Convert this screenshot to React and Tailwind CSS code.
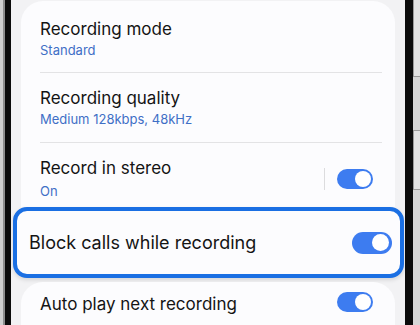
function Toggle({ big }) {
  return (
    <div
      className={
        big
          ? 'flex h-[22px] w-[40px] items-center justify-end rounded-full bg-[#3d7cf0] px-[3px]'
          : 'flex h-[20px] w-[36px] items-center justify-end rounded-full bg-[#3d7cf0] px-[2px]'
      }
    >
      <div className={big ? 'h-[17px] w-[17px] rounded-full bg-white' : 'h-[16px] w-[16px] rounded-full bg-white'} />
    </div>
  );
}

function SettingRow({ title, value }) {
  return (
    <div className="flex flex-col">
      <p className="text-[17px] leading-[22px] text-[#141414]">{title}</p>
      <p className="mt-[1px] text-[13px] leading-[18px] text-[#3f6fc6]">{value}</p>
    </div>
  );
}

export default function App() {
  return (
    <div className="flex h-[325px] w-[420px] overflow-hidden bg-[#f2f2f4] font-['Inter',sans-serif]">
      {/* left bezel */}
      <div className="flex h-full shrink-0">
        <div className="w-[3px] bg-[#cfcfcf]" />
        <div className="w-[2px] bg-[#8d8d8d]" />
        <div className="w-[6px] bg-[#0b0b0b]" />
      </div>

      {/* screen */}
      <div className="flex min-w-0 flex-1 flex-col">
        <div className="mx-[10px] mt-[1px] h-[206px] shrink-0 rounded-t-[22px] bg-[#fcfcfe] px-[19px] pt-[17px]">
          <SettingRow title="Recording mode" value="Standard" />
          <div className="mt-[13px] h-px w-[342px] bg-[#e3e3e5]" />
          <div className="pt-[14px]">
            <SettingRow title="Recording quality" value="Medium 128kbps, 48kHz" />
          </div>
          <div className="mt-[14px] h-px w-[342px] bg-[#e3e3e5]" />
          <div className="flex items-center pt-[14px]">
            <div className="flex flex-1 flex-col">
              <p className="text-[17px] leading-[22px] text-[#141414]">Record in stereo</p>
              <p className="mt-[3px] text-[13px] leading-[18px] text-[#3f6fc6]">On</p>
            </div>
            <div className="mr-[12px] h-[22px] w-px bg-[#dcdcde]" />
            <Toggle />
            <div className="w-[3px]" />
          </div>
        </div>

        <div className="ml-[2px] mr-[1px] flex h-[71px] shrink-0 items-center rounded-[14px] border-[4px] border-[#1a6fe3] bg-[#fcfcfe] pl-[12px] pr-[8px] shadow-[0_2px_4px_rgba(0,0,0,0.12)]">
          <p className="flex-1 text-[18px] leading-[24px] text-[#141414]">Block calls while recording</p>
          <Toggle big />
        </div>

        <div className="mx-[10px] mt-[4px] flex h-[60px] shrink-0 items-start rounded-t-[22px] bg-[#fcfcfe] pl-[19px] pr-[22px] pt-[11px]">
          <p className="flex-1 text-[17px] leading-[22px] text-[#141414]">Auto play next recording</p>
          <div className="mt-[-1px]">
            <Toggle />
          </div>
        </div>
      </div>

      {/* right bezel */}
      <div className="flex h-full shrink-0">
        <div className="w-[8px] bg-[#0b0b0b]" />
        <div className="flex w-[7px] flex-col bg-[#d6d6d6]">
          <div className="h-[77px] border-b border-l border-[#9a9a9a] bg-[#e2e2e2]" />
          <div className="h-[53px]" />
          <div className="h-[60px] border-y border-l border-[#9a9a9a] bg-[#e2e2e2]" />
        </div>
      </div>
    </div>
  );
}
